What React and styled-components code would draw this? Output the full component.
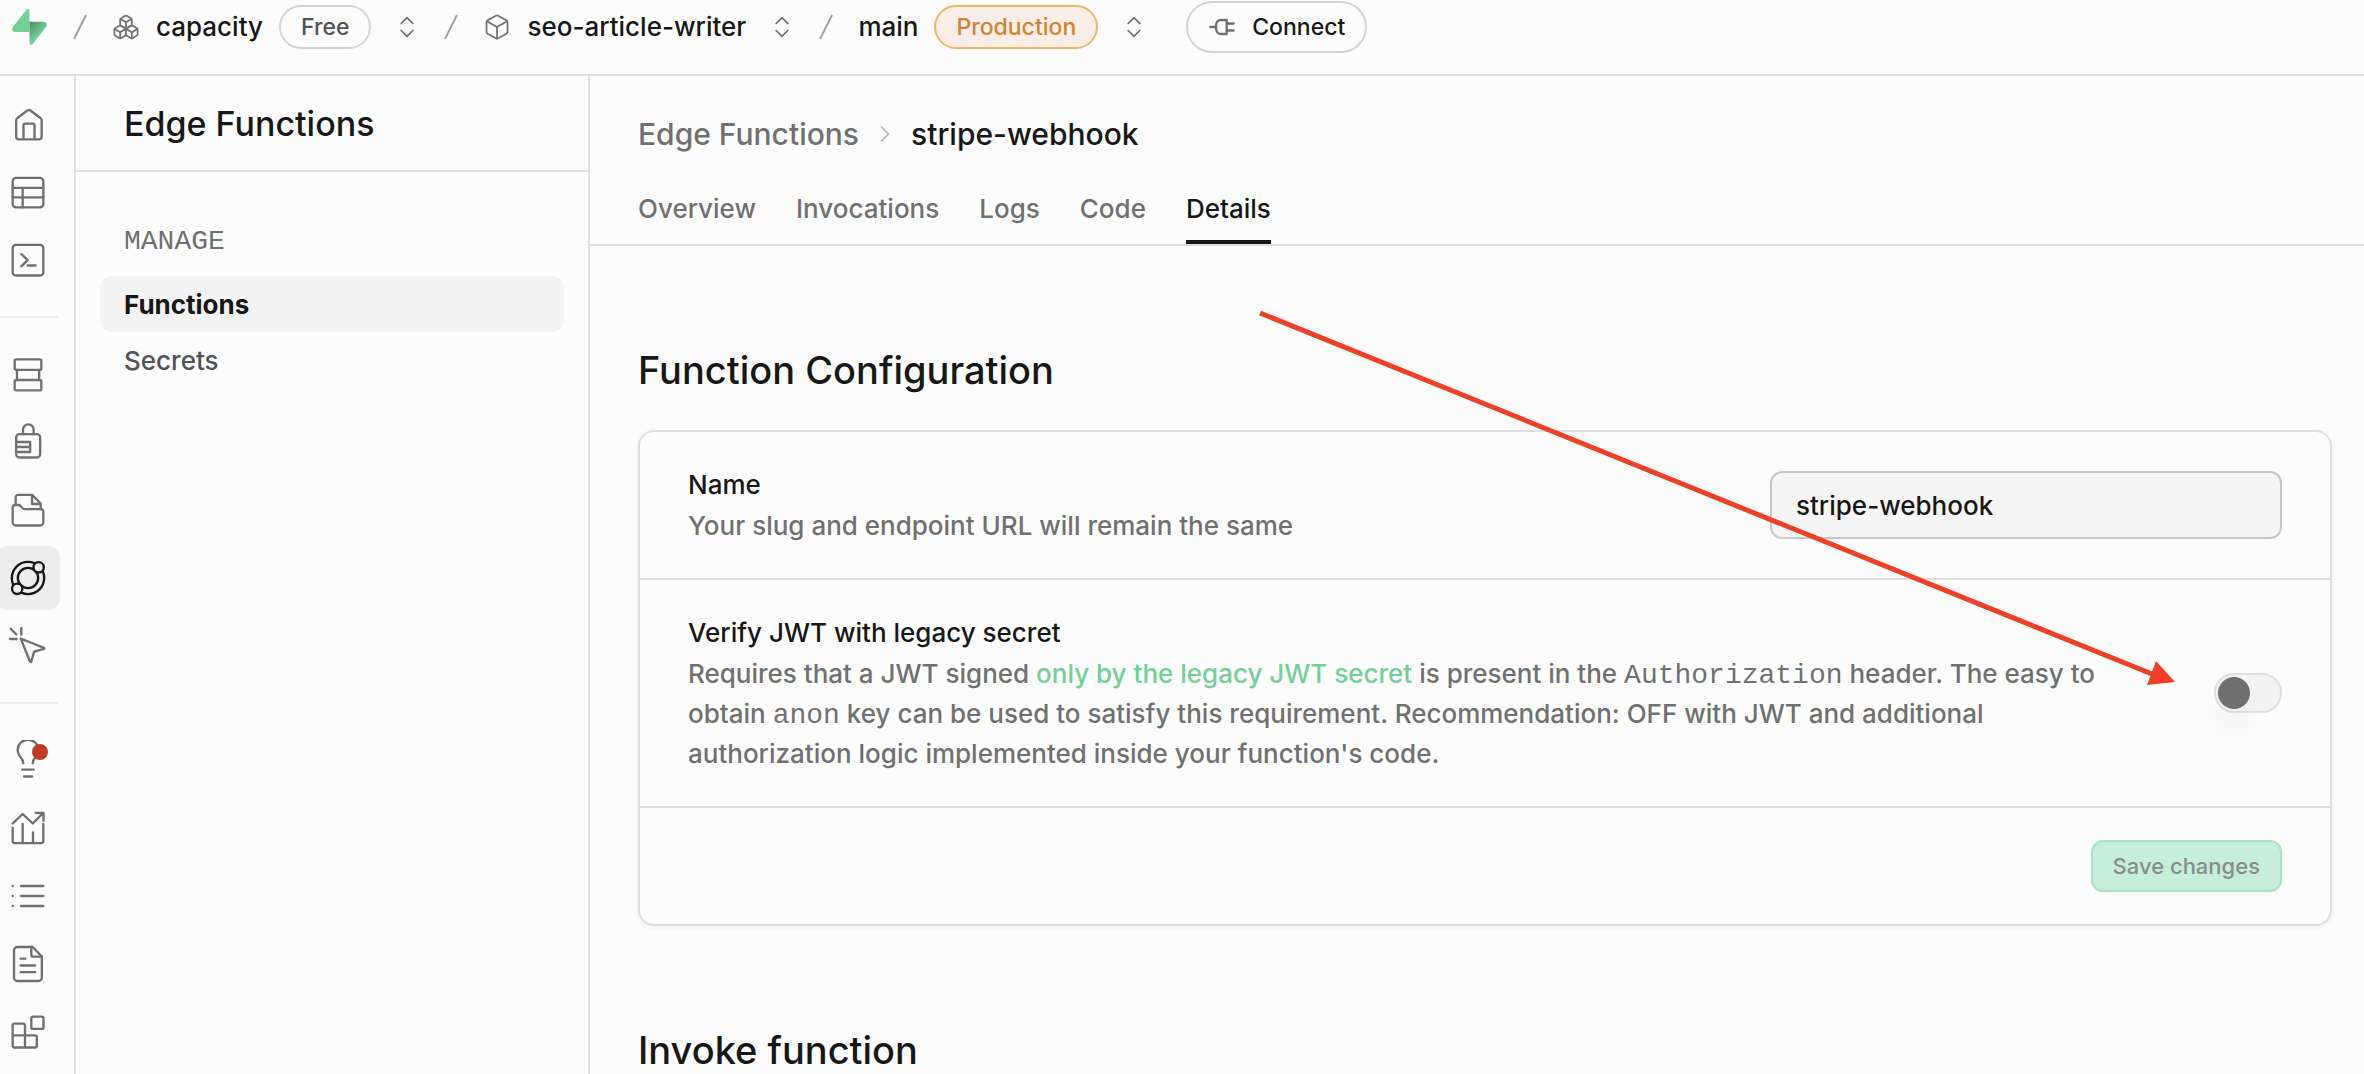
import React, { useState } from "react";
import styled, { createGlobalStyle, ThemeProvider } from "styled-components";
import { Box, Boxes, ChevronRight, ChevronsUpDown } from "lucide-react";

const theme = {
  bg: "#fcfcfc",
  border: "#dfdfdf",
  borderStrong: "#c7c7c7",
  text: "#171717",
  textLight: "#525252",
  textLighter: "#707070",
  brand: "#72cf98",
  sans: `Inter, "Liberation Sans", sans-serif`,
  mono: `"Liberation Mono", monospace`,
  sizeXs: "22px",
  sizeSm: "23px",
  sizeMd: "26px",
  sizeLg: "30px",
  sizeXl: "34px",
  sizeXxl: "38px"
};

const GlobalStyle = createGlobalStyle`
  *, *::before, *::after {
    box-sizing: border-box;
  }

  body {
    margin: 0;
    background: ${props => props.theme.bg};
    color: ${props => props.theme.text};
    font-family: ${props => props.theme.sans};
    font-size: ${props => props.theme.sizeMd};
    font-weight: 450;
    line-height: 40px;
  }

  h1, h2, p, ul, ol {
    margin: 0;
    padding: 0;
    list-style: none;
  }

  a {
    color: inherit;
    text-decoration: none;
  }

  button, input {
    font: inherit;
    color: inherit;
  }
`;

const Page = styled.div`
  display: flex;
  flex-direction: column;
  min-height: 100vh;
`;

const Body = styled.div`
  display: flex;
  flex: 1;
`;

/* top bar */

const TopBar = styled.header`
  display: flex;
  align-items: center;
  padding: 1px 12px 21px;
  border-bottom: 2px solid ${props => props.theme.border};
`;

const LogoLink = styled.a`
  display: flex;
  margin-right: 3px;
`;

const Crumb = styled.div`
  display: flex;
  align-items: center;
`;

const CrumbLink = styled.a`
  display: flex;
  align-items: center;
  gap: 16px;
  margin-right: 16px;

  svg {
    color: ${props => props.theme.textLighter};
  }
`;

const Slash = styled.svg`
  margin: 0 25px 0 23px;
`;

const Pill = styled.span`
  padding: 0 20px;
  border: 2px solid ${props => (props.$warning ? "#e9b965" : "#d4d4d4")};
  border-radius: 22px;
  background: ${props => (props.$warning ? "#f8eee7" : "transparent")};
  color: ${props => (props.$warning ? "#d08336" : props.theme.textLight)};
  font-size: ${props => props.theme.sizeSm};
`;

const SwitcherButton = styled.button`
  display: flex;
  margin-left: ${props => (props.$tight ? 6 : 22)}px;
  padding: 8px 0;
  border: 0;
  background: none;
  color: ${props => props.theme.textLighter};
`;

const ConnectButton = styled.button`
  display: flex;
  align-items: center;
  gap: 16px;
  height: 52px;
  margin-left: 38px;
  padding: 0 20px;
  border: 2px solid #d4d4d4;
  border-radius: 26px;
  background: ${props => props.theme.bg};
  font-size: ${props => props.theme.sizeSm};

  svg {
    color: ${props => props.theme.textLighter};
  }
`;

/* icon rail */

const Rail = styled.nav`
  display: flex;
  flex-direction: column;
  flex: none;
  gap: 24px;
  width: 76px;
  padding-top: 16px;
  border-right: 2px solid ${props => props.theme.border};
`;

const RailGroup = styled.ul`
  display: flex;
  flex-direction: column;
  gap: 4px;
  margin-left: -4px;
`;

const RailDivider = styled.hr`
  width: 58px;
  height: 2px;
  margin: 0;
  border: 0;
  background: #ebebeb;
`;

const RailLink = styled.a`
  position: relative;
  display: flex;
  align-items: center;
  justify-content: center;
  width: 64px;
  height: 64px;
  border-radius: 12px;
  background: ${props => (props.$active ? "#ededed" : "transparent")};
  color: ${props => (props.$active ? props.theme.text : props.theme.textLighter)};
`;

const Dot = styled.span`
  position: absolute;
  top: 16px;
  right: 12px;
  width: 16px;
  height: 16px;
  border-radius: 50%;
  background: #bf3d25;
`;

/* section menu */

const SideMenu = styled.aside`
  flex: none;
  width: 514px;
  border-right: 2px solid ${props => props.theme.border};
`;

const SideTitle = styled.h1`
  padding: 24px 48px 22px;
  border-bottom: 2px solid ${props => props.theme.border};
  font-size: ${props => props.theme.sizeXl};
  font-weight: 500;
  line-height: 48px;
`;

const SideGroup = styled.div`
  padding: 50px 24px;
`;

const SideLabel = styled.h2`
  padding: 0 24px;
  margin-bottom: 14px;
  color: ${props => props.theme.textLighter};
  font-family: ${props => props.theme.mono};
  font-size: 28px;
  font-weight: 400;
  text-transform: uppercase;
`;

const SideLink = styled.a`
  display: block;
  padding: 9px 24px 7px;
  border-radius: 12px;
  background: ${props => (props.$active ? "#f3f3f3" : "transparent")};
  color: ${props => (props.$active ? props.theme.text : props.theme.textLight)};
  font-weight: ${props => (props.$active ? 650 : 450)};
`;

/* main column */

const Main = styled.main`
  position: relative;
  flex: 1;
  min-width: 0;
`;

const PageHeader = styled.div`
  padding: 40px 48px 0;
  border-bottom: 2px solid ${props => props.theme.border};
`;

const Breadcrumb = styled.nav`
  display: flex;
  align-items: center;
  gap: 12px;
  margin-bottom: 37px;
  color: ${props => props.theme.textLighter};
  font-size: ${props => props.theme.sizeLg};
  line-height: 36px;

  [aria-current] {
    color: ${props => props.theme.text};
  }

  svg {
    color: #b2b2b2;
  }
`;

const Tabs = styled.nav`
  display: flex;
  gap: 40px;
`;

const Tab = styled.a`
  padding-bottom: 11px;
  border-bottom: 4px solid ${props => (props.$active ? props.theme.text : "transparent")};
  color: ${props => (props.$active ? props.theme.text : props.theme.textLighter)};
`;

const Content = styled.div`
  display: flex;
  flex-direction: column;
  gap: 100px;
  padding: 100px 32px 0 48px;
`;

const Section = styled.section`
  display: flex;
  flex-direction: column;
  gap: 36px;
`;

const SectionTitle = styled.h2`
  font-size: ${props => props.theme.sizeXxl};
  font-weight: 450;
  line-height: 48px;
`;

const Card = styled.form`
  border: 2px solid ${props => props.theme.border};
  border-radius: 16px;
  box-shadow: 0 2px 4px rgba(0, 0, 0, 0.05);
`;

const CardRow = styled.div`
  display: flex;
  align-items: center;
  justify-content: space-between;
  gap: 64px;
  padding: 32px 48px;

  & + & {
    border-top: 2px solid ${props => props.theme.border};
  }
`;

const CardFooter = styled(CardRow)`
  justify-content: flex-end;
`;

const FieldText = styled.div`
  flex: 1;
  max-width: 1440px;
`;

const FieldLabel = styled.label`
  display: block;
  line-height: 42px;
`;

const FieldHint = styled.p`
  color: ${props => props.theme.textLighter};

  code {
    font-family: ${props => props.theme.mono};
    font-size: 28px;
    font-weight: 400;
    line-height: 1;
  }

  a {
    color: ${props => props.theme.brand};
  }
`;

const TextInput = styled.input`
  width: 512px;
  height: 68px;
  padding: 0 24px;
  border: 2px solid ${props => props.theme.borderStrong};
  border-radius: 12px;
  background: #f5f5f5;
`;

const Switch = styled.input`
  appearance: none;
  flex: none;
  width: 68px;
  height: 40px;
  margin: 0;
  padding: 2px;
  border: 2px solid ${props => props.theme.border};
  border-radius: 20px;
  background: #f3f3f3;

  &::before {
    content: "";
    display: block;
    width: 32px;
    height: 32px;
    border-radius: 50%;
    background: ${props => props.theme.textLighter};
    box-shadow: 0 20px 30px -6px rgba(0, 0, 0, 0.1);
  }

  &:checked {
    background: ${props => props.theme.brand};
  }

  &:checked::before {
    margin-left: auto;
    background: #ffffff;
  }
`;

const SaveButton = styled.button`
  height: 52px;
  padding: 0 20px;
  border: 2px solid #aee0c3;
  border-radius: 12px;
  background: #c5efd8;
  color: #8b8b8b;
  font-size: ${props => props.theme.sizeXs};
`;

const Arrow = styled.svg`
  position: absolute;
  top: 232px;
  right: 188px;
  pointer-events: none;
`;

const Icon = ({ children }) => (
  <svg
    width="40"
    height="40"
    viewBox="0 0 24 24"
    fill="none"
    stroke="currentColor"
    strokeWidth="1.4"
    strokeLinecap="round"
    strokeLinejoin="round"
    aria-hidden="true"
  >
    {children}
  </svg>
);

const railGroups = [
  [
    {
      label: "Home",
      icon: (
        <>
          <path d="M4.9 9.8c0-.6.3-1.1.8-1.4l5.9-4.5c.6-.5 1.3-.5 1.9 0l5.9 4.5c.5.3.8.8.8 1.4v9.7a1.7 1.7 0 0 1-1.7 1.7H6.6a1.7 1.7 0 0 1-1.7-1.7z" />
          <path d="M9.3 21v-8.2a1 1 0 0 1 1-1h4.6a1 1 0 0 1 1 1V21" />
        </>
      )
    },
    {
      label: "Table Editor",
      icon: (
        <>
          <rect x="2.8" y="3.5" width="18.4" height="17.7" rx="2" />
          <path d="M2.8 9.5h18.4M2.8 15.2h18.4M8.8 9.5v11.7" />
        </>
      )
    },
    {
      label: "SQL Editor",
      icon: (
        <>
          <rect x="2.8" y="2.9" width="18.4" height="18.4" rx="2" />
          <path d="M8 8.4l3.8 3.7L8 15.8M11.8 15.3h4.8" />
        </>
      )
    }
  ],
  [
    {
      label: "Database",
      icon: (
        <>
          <rect x="4" y="3.2" width="16" height="6.3" rx="1" />
          <rect x="4" y="15.6" width="16" height="6.2" rx="1" />
          <path d="M5.4 9.5v6.1M18.7 9.5v6.1" />
        </>
      )
    },
    {
      label: "Authentication",
      icon: (
        <>
          <rect x="4.9" y="7.3" width="14.4" height="14" rx="2" />
          <path d="M9 7.3V4.6a3.2 3.2 0 0 1 6.4 0v2.7M4.9 12h8.4v6H4.9M4.9 15h8.4" />
        </>
      )
    },
    {
      label: "Storage",
      icon: (
        <>
          <path d="M2.8 10.6c0-.9.7-1.6 1.6-1.6h2c1.6 0 1.7 2.5 3.8 2.5h9.4c.9 0 1.6.7 1.6 1.6v6.2c0 1.1-.9 2-2 2H4.8c-1.1 0-2-.9-2-2z" />
          <path d="M4.6 9V4.3c0-.8.6-1.4 1.4-1.4h8.5l5.1 5.2v3.2M14.4 3v5.4h5.2" />
        </>
      )
    },
    {
      label: "Edge Functions",
      active: true,
      icon: (
        <>
          <circle cx="12" cy="12" r="9.7" />
          <circle cx="12" cy="12" r="6.1" />
          <circle cx="18.4" cy="5.6" r="3.1" fill="#ededed" />
          <circle cx="5.5" cy="18.5" r="3.1" fill="#ededed" />
        </>
      )
    },
    {
      label: "Realtime",
      icon: (
        <path d="M7.6 7.5l14 5.6c.3.1.3.5 0 .6l-5.9 1.7-1.7 5.9c-.1.4-.6.4-.8 0zM1.7 1.7l3.3 3.4M8 1.2v4M1.2 7.8h4" />
      )
    }
  ],
  [
    {
      label: "Advisors",
      badge: true,
      icon: (
        <path d="M9.2 14c0-1.8-.9-2.9-1.8-3.8a6.2 6.2 0 1 1 9.2 0c-.9.9-1.8 2-1.8 3.8M8.6 17.8h6.8M9.6 21.9h4.9" />
      )
    },
    {
      label: "Reports",
      icon: (
        <path d="M2.8 9.3l6-5.7 6 5.7 6.4-6.4M16.6 2.9h4.7v4.7M2.8 11.8v7.9c0 .8.6 1.4 1.4 1.4h15.6c.8 0 1.4-.6 1.4-1.4V9.5M8.8 9.5v11.6M15 14.6v6.5" />
      )
    },
    {
      label: "Logs",
      icon: <path d="M2.8 6h.1M2.8 12h.1M2.8 18h.1M7.8 6h13.4M7.8 12h13.4M7.8 18h13.4" />
    },
    {
      label: "API Docs",
      icon: (
        <>
          <path d="M14.8 1.8H5.6c-1.1 0-2 .9-2 2v16.4c0 1.1.9 2 2 2h12.7c1.1 0 2-.9 2-2V7.5z" />
          <path d="M14 1.8v4.6c0 .7.5 1.2 1.2 1.2h5.1M7.6 8.8h2.8M7.6 12.9h8.7M7.6 16.9h8.7" />
        </>
      )
    },
    {
      label: "Integrations",
      icon: (
        <>
          <rect x="14" y="2.8" width="7.3" height="7.3" rx="1" />
          <path d="M10.2 14V8c0-.6-.4-1-1-1H3.8c-.6 0-1 .4-1 1v12.3c0 .6.4 1 1 1h12.5c.6 0 1-.4 1-1V15c0-.6-.4-1-1-1H2.8M10.2 14v7.3" />
        </>
      )
    }
  ]
];

const tabs = ["Overview", "Invocations", "Logs", "Code", "Details"];

const Logo = () => (
  <svg width="35" height="36" viewBox="0 0 109 113" fill="none" aria-hidden="true">
    <defs>
      <linearGradient id="logoShade" x1="54" y1="40" x2="92" y2="76" gradientUnits="userSpaceOnUse">
        <stop stopColor="#4f8d68" />
        <stop offset="1" stopColor="#72cf98" />
      </linearGradient>
    </defs>
    <path
      fill="url(#logoShade)"
      d="M63.7 110.3c-2.9 3.6-8.6 1.6-8.7-3L54 40h45.2c8.2 0 12.8 9.5 7.7 15.9z"
    />
    <path
      fill="#72cf98"
      d="M45.3 2.1c2.9-3.6 8.7-1.7 8.7 2.9l.5 67.3H9.8c-8.2 0-12.7-9.5-7.6-15.9z"
    />
  </svg>
);

const Divider = () => (
  <Slash width="14" height="26" viewBox="0 0 14 26" aria-hidden="true">
    <path d="M1 25L13 1" stroke="#a0a0a0" strokeWidth="2" />
  </Slash>
);

const Switcher = ({ label, tight }) => (
  <SwitcherButton type="button" aria-label={label} $tight={tight}>
    <ChevronsUpDown size={28} strokeWidth={1.5} />
  </SwitcherButton>
);

const PlugIcon = () => (
  <svg
    width="28"
    height="28"
    viewBox="0 0 24 24"
    fill="none"
    stroke="currentColor"
    strokeWidth="2"
    strokeLinecap="round"
    strokeLinejoin="round"
    aria-hidden="true"
  >
    <path d="M2 12h5M16 9h6M16 15h6M16 18h-5a4 4 0 0 1-4-4v-4a4 4 0 0 1 4-4h5z" />
  </svg>
);

const TopNav = () => (
  <TopBar>
    <LogoLink href="#home" aria-label="Dashboard">
      <Logo />
    </LogoLink>
    <Divider />
    <Crumb>
      <CrumbLink href="#org">
        <Boxes size={28} strokeWidth={1.5} />
        capacity
      </CrumbLink>
      <Pill>Free</Pill>
      <Switcher label="Switch organization" />
    </Crumb>
    <Divider />
    <Crumb>
      <CrumbLink href="#project">
        <Box size={28} strokeWidth={1.5} />
        seo-article-writer
      </CrumbLink>
      <Switcher label="Switch project" tight />
    </Crumb>
    <Divider />
    <Crumb>
      <CrumbLink href="#branch">main</CrumbLink>
      <Pill $warning>Production</Pill>
      <Switcher label="Switch branch" />
    </Crumb>
    <ConnectButton type="button">
      <PlugIcon />
      Connect
    </ConnectButton>
  </TopBar>
);

const IconRail = () => (
  <Rail aria-label="Product">
    {railGroups.map((group, i) => (
      <React.Fragment key={i}>
        {i > 0 && <RailDivider />}
        <RailGroup>
          {group.map(({ label, icon, active, badge }) => (
            <li key={label}>
              <RailLink href="#rail" aria-label={label} $active={active}>
                <Icon>{icon}</Icon>
                {badge && <Dot />}
              </RailLink>
            </li>
          ))}
        </RailGroup>
      </React.Fragment>
    ))}
  </Rail>
);

const App = () => {
  const [name, setName] = useState("stripe-webhook");
  const [verifyJwt, setVerifyJwt] = useState(false);

  return (
    <ThemeProvider theme={theme}>
      <GlobalStyle />
      <Page>
        <TopNav />
        <Body>
          <IconRail />
          <SideMenu>
            <SideTitle>Edge Functions</SideTitle>
            <SideGroup>
              <SideLabel>Manage</SideLabel>
              <SideLink href="#functions" $active>
                Functions
              </SideLink>
              <SideLink href="#secrets">Secrets</SideLink>
            </SideGroup>
          </SideMenu>
          <Main>
            <PageHeader>
              <Breadcrumb aria-label="Breadcrumb">
                <a href="#functions">Edge Functions</a>
                <ChevronRight size={28} strokeWidth={1.5} />
                <span aria-current="page">stripe-webhook</span>
              </Breadcrumb>
              <Tabs>
                {tabs.map(tab => (
                  <Tab key={tab} href="#tab" $active={tab === "Details"}>
                    {tab}
                  </Tab>
                ))}
              </Tabs>
            </PageHeader>
            <Content>
              <Section>
                <SectionTitle>Function Configuration</SectionTitle>
                <Card onSubmit={e => e.preventDefault()}>
                  <CardRow>
                    <FieldText>
                      <FieldLabel htmlFor="name">Name</FieldLabel>
                      <FieldHint>Your slug and endpoint URL will remain the same</FieldHint>
                    </FieldText>
                    <TextInput
                      id="name"
                      type="text"
                      value={name}
                      onChange={e => setName(e.target.value)}
                    />
                  </CardRow>
                  <CardRow>
                    <FieldText>
                      <FieldLabel htmlFor="verify-jwt">Verify JWT with legacy secret</FieldLabel>
                      <FieldHint>
                        Requires that a JWT signed{" "}
                        <a href="#jwt">only by the legacy JWT secret</a> is present in the{" "}
                        <code>Authorization</code> header. The easy to obtain <code>anon</code> key
                        can be used to satisfy this requirement. Recommendation: OFF with JWT and
                        additional authorization logic implemented inside your function's code.
                      </FieldHint>
                    </FieldText>
                    <Switch
                      id="verify-jwt"
                      type="checkbox"
                      role="switch"
                      checked={verifyJwt}
                      onChange={e => setVerifyJwt(e.target.checked)}
                    />
                  </CardRow>
                  <CardFooter>
                    <SaveButton type="submit" disabled>
                      Save changes
                    </SaveButton>
                  </CardFooter>
                </Card>
              </Section>
              <Section>
                <SectionTitle>Invoke function</SectionTitle>
              </Section>
            </Content>
            <Arrow width="920" height="380" viewBox="0 0 920 380" aria-hidden="true">
              <path d="M4 5L896 366" stroke="#ee4026" strokeWidth="5" />
              <path d="M900 353L919 374L891 377z" fill="#ee4026" />
            </Arrow>
          </Main>
        </Body>
      </Page>
    </ThemeProvider>
  );
};

export default App;
